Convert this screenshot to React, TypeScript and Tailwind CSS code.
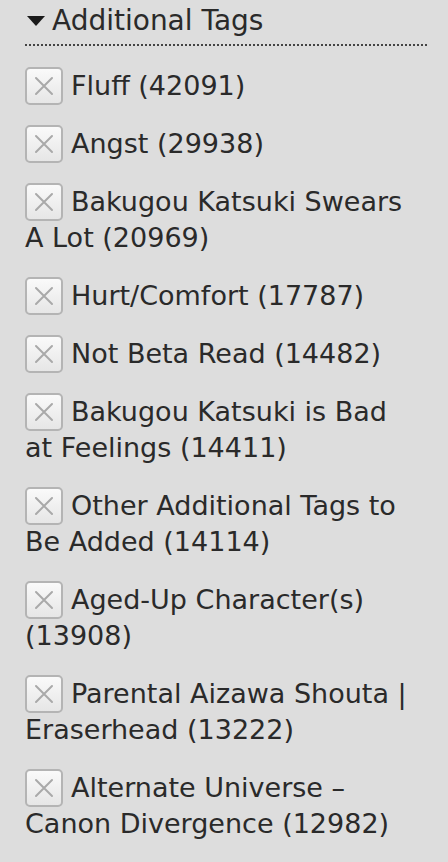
const tags = [
  'Fluff (42091)',
  'Angst (29938)',
  'Bakugou Katsuki Swears A Lot (20969)',
  'Hurt/Comfort (17787)',
  'Not Beta Read (14482)',
  'Bakugou Katsuki is Bad at Feelings (14411)',
  'Other Additional Tags to Be Added (14114)',
  'Aged-Up Character(s) (13908)',
  'Parental Aizawa Shouta | Eraserhead (13222)',
  'Alternate Universe – Canon Divergence (12982)',
]

function Checkbox() {
  return (
    <span className="-my-[1px] mr-[8px] inline-flex h-[38px] w-[38px] items-center justify-center rounded-[5px] border-2 border-[#b4b4b4] bg-gradient-to-b from-[#fafafa] to-[#e6e6e6] align-top">
      <svg width="22" height="22" viewBox="0 0 22 22">
        <path d="M3 3 L19 19 M19 3 L3 19" stroke="#a9a9a9" strokeWidth="2" strokeLinecap="round" />
      </svg>
    </span>
  )
}

export default function App() {
  return (
    <div
      className="h-[862px] w-[448px] bg-[#dddddd] pt-[3px] pr-[36px] pl-[25px] text-[#2a2a2a]"
      style={{ fontFamily: '"DejaVu Sans", "Liberation Sans", sans-serif' }}
    >
      <h3 className="-mr-[15px] flex items-center border-b-2 border-dotted border-[#444] pb-[5px] text-[28px] leading-[36px]">
        <svg width="20" height="12" viewBox="0 0 20 12" className="mr-[5px] ml-[2px]">
          <path d="M0 1 L18 1 L9 11 Z" fill="#1a1a1a" />
        </svg>
        Additional Tags
      </h3>
      <ul className="mt-[22px] flex flex-col gap-[22px] text-[27px] leading-[36px]">
        {tags.map(t => (
          <li key={t}>
            <Checkbox />
            {t}
          </li>
        ))}
      </ul>
    </div>
  )
}
